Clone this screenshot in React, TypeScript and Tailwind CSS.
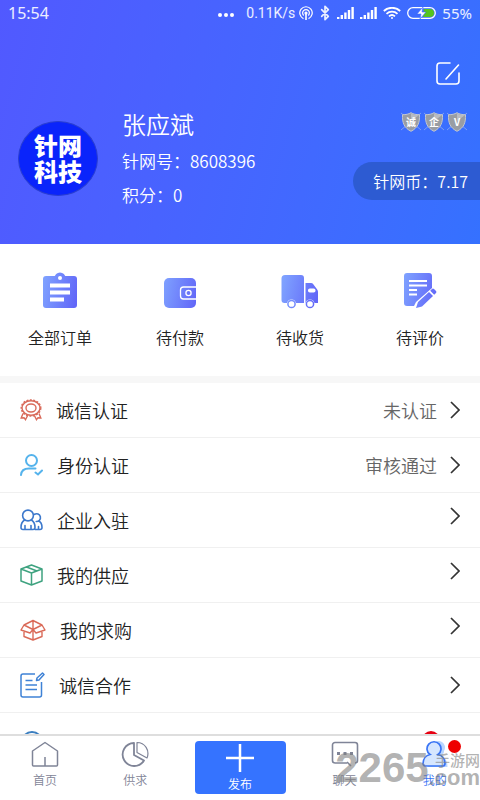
import type { ReactNode } from "react";
import { Bluetooth } from "lucide-react";
import clsx from "clsx";

const blue = "url(#order-blue)";

const orders = [
  {
    label: "全部订单",
    icon: (
      <>
        <rect x="3" y="4" width="34" height="32" rx="3" fill={blue} />
        <circle cx="20" cy="6" r="5.500" fill={blue} />
        <circle cx="20" cy="6" r="2" fill="#fff" />
        <path stroke="#fff" strokeWidth="4" d="M10 13.500h20M10 20.500h20M10 27.500h14" />
      </>
    ),
  },
  {
    label: "待付款",
    icon: (
      <>
        <rect x="4" y="6" width="32" height="30" rx="5" fill={blue} />
        <path
          fill="none"
          stroke="#fff"
          strokeWidth="1.300"
          d="M36 15H23.500a3 3 0 0 0-3 3v6a3 3 0 0 0 3 3H36"
        />
        <circle cx="28.500" cy="21" r="2.600" fill="none" stroke="#fff" strokeWidth="1.300" />
      </>
    ),
  },
  {
    label: "待收货",
    icon: (
      <>
        <path
          fill={blue}
          d="M5 3h16a3 3 0 0 1 3 3v25H4.500a3 3 0 0 1-3-3V6.500A3.500 3.500 0 0 1 5 3Zm20.500 8H31c1 0 1.700.4 2.300 1.200l3.700 5c.6.800 1 1.500 1 2.500V31H25.500Z"
        />
        <rect x="28" y="16.500" width="7.500" height="4" rx="1.800" fill="#fff" />
        <circle cx="11.500" cy="32" r="4.600" fill="#fff" />
        <circle cx="30" cy="32" r="4.600" fill="#fff" />
        <circle cx="11.500" cy="32" r="3.600" fill="#fff" stroke={blue} strokeWidth="1.500" />
        <circle cx="30" cy="32" r="3.600" fill="#fff" stroke={blue} strokeWidth="1.500" />
      </>
    ),
  },
  {
    label: "待评价",
    icon: (
      <>
        <path
          fill={blue}
          d="M7 1h22a3 3 0 0 1 3 3v12L16 30l-2 4H7a3 3 0 0 1-3-3V4a3 3 0 0 1 3-3Z"
        />
        <path stroke="#fff" strokeWidth="1.800" d="M9 9h18M9 13.500h18M9 18h8M9 22.500h8" />
        <path
          fill={blue}
          d="m29 20 4 4-11 10.500-6 1.500 2-6Zm1.200-1.200 1.800-1.800a1.500 1.500 0 0 1 2 0l2 2a1.500 1.500 0 0 1 0 2l-1.800 1.800Z"
        />
      </>
    ),
  },
];

type Row = { label?: string; value?: string; dot?: boolean; raised?: boolean; icon: ReactNode };

const rows: Row[] = [
  {
    label: "诚信认证",
    value: "未认证",
    icon: (
      <svg className="h-[22px] w-[22px]" viewBox="0 0 22 22" fill="none" stroke="#d96b5b" strokeWidth="1.400">
        <ellipse cx="11" cy="9" rx="9" ry="7.300" />
        <ellipse cx="11" cy="9" rx="9.800" ry="8.100" strokeDasharray="2 1.400" />
        <ellipse cx="11" cy="9" rx="5" ry="4" />
        <path d="M3 14.500 1.200 19l2.800-.3 1.500 2 2-3.900M19 14.500l1.800 4.500-2.800-.3-1.500 2-2-3.900" />
      </svg>
    ),
  },
  {
    label: "身份认证",
    value: "审核通过",
    icon: (
      <svg
        className="h-[22px] w-[23px]"
        viewBox="0 0 23 22"
        fill="none"
        stroke="#55b3ec"
        strokeWidth="2"
        strokeLinecap="round"
      >
        <circle cx="11.500" cy="6.500" r="5.500" />
        <path d="M1 21c.3-4.500 3.500-6.500 8-6.500h6.500M15.500 18.500l2.500 2 4-4" />
      </svg>
    ),
  },
  {
    label: "企业入驻",
    raised: true,
    icon: (
      <svg
        className="h-[22px] w-[23px]"
        viewBox="0 0 23 22"
        fill="none"
        stroke="#3c78cc"
        strokeWidth="1.600"
        strokeLinecap="round"
        strokeLinejoin="round"
      >
        <circle cx="8" cy="6.500" r="5.400" />
        <path d="M4.500 11C2 12.500 1 15.500 1 18.500c0 1.400.6 2 2 2h10c1.400 0 2-.6 2-2 0-3-1-6-3.500-7.500M5 20v-3.500M11 20v-3.500" />
        <path d="M14.500 5.300a3.900 3.900 0 1 1 1.700 7.200M18.500 12c2.500 1 3.500 3.500 3.500 6.500 0 1.400-.6 2-2 2h-5M18.500 20v-2.500" />
      </svg>
    ),
  },
  {
    label: "我的供应",
    raised: true,
    icon: (
      <svg
        className="h-[22px] w-[23px]"
        viewBox="0 0 23 22"
        fill="none"
        stroke="#3fa380"
        strokeWidth="1.500"
        strokeLinejoin="round"
      >
        <path d="M11.500 1 22 5v12l-10.500 4L1 17V5ZM1 5l10.500 4L22 5M11.500 9v12M6.500 3 17 7" />
      </svg>
    ),
  },
  {
    label: "我的求购",
    raised: true,
    icon: (
      <svg
        className="h-[22px] w-[26px]"
        viewBox="0 0 26 22"
        fill="none"
        stroke="#da6a58"
        strokeWidth="1.400"
        strokeLinejoin="round"
      >
        <path d="M4 6 13 1.500 22 6l3 5-9 3-3-3.500-3 3.500-9-3Zm0 0 9 4.500L22 6M4 12v5.500l9 3.500 9-3.500V12M13 1.500V21" />
      </svg>
    ),
  },
  {
    label: "诚信合作",
    icon: (
      <svg
        className="h-[26px] w-[25px]"
        viewBox="0 0 25 26"
        fill="none"
        stroke="#3f82d6"
        strokeWidth="1.500"
        strokeLinejoin="round"
      >
        <path d="M15 2H3a2 2 0 0 0-2 2v19a2 2 0 0 0 2 2h16.500a2 2 0 0 0 2-2V10" />
        <path d="m16.500 8.500.5-2.500 5.500-5 1.500 1.500-5 5.500ZM5.500 8.500h7M5.500 13h11.500M5.500 17.500h11.500" />
      </svg>
    ),
  },
  {
    dot: true,
    icon: (
      <svg className="h-[22px] w-6" viewBox="0 0 24 22" fill="none" stroke="#3c7fc0" strokeWidth="2">
        <circle cx="12" cy="13" r="10" />
      </svg>
    ),
  },
];

function Signal() {
  return (
    <svg className="h-3 w-[17px]" viewBox="0 0 17 12" stroke="#fff" strokeWidth="2.400">
      <path d="M1.200 12v-2M4.800 12V8M8.400 12V5.500M12 12V3M15.600 12V0" />
    </svg>
  );
}

function StatusBar() {
  return (
    <div className="flex h-[26px] items-center justify-between px-2 font-normal text-white/90">
      <span className="font-['Noto_Sans',sans-serif] text-base">15:54</span>
      <div className="flex items-center gap-1.5 font-[Roboto,sans-serif] text-[15px]">
        <svg className="mt-1 mr-1.5 h-1 w-4" viewBox="0 0 16 4" fill="#fff">
          <circle cx="2" cy="2" r="2" />
          <circle cx="8" cy="2" r="2" />
          <circle cx="14" cy="2" r="2" />
        </svg>
        <div className="flex items-center gap-1">
          <span className="text-sm">0.11K/s</span>
          <svg className="h-3.5 w-3.5" viewBox="0 0 14 14" fill="none" stroke="#fff" strokeWidth="1.200">
            <path d="M4.500 12.600a6.200 6.200 0 1 1 5 0M4.700 9.500a3.400 3.400 0 1 1 4.600 0" />
            <circle cx="7" cy="7" r="1" fill="#fff" />
            <path d="M7 8v6" strokeWidth="1.600" />
          </svg>
        </div>
        <Bluetooth className="-mx-0.5 h-4 w-4" strokeWidth={2.5} />
        <Signal />
        <Signal />
        <svg className="h-3 w-[18px]" viewBox="0 0 18 12" fill="none" stroke="#fff" strokeWidth="1.800">
          <path d="M.8 4a12 12 0 0 1 16.400 0M3.500 6.800a8 8 0 0 1 11 0M6 9.300a4.500 4.500 0 0 1 6 0" />
          <circle cx="9" cy="11" r="1" fill="#fff" stroke="none" />
        </svg>
        <div className="flex items-center gap-1.5">
          <svg className="h-3 w-[29px]" viewBox="0 0 29 12">
            <path d="M17 2h6a4 4 0 0 1 0 8h-7Z" fill="#55c41e" />
            <rect x=".7" y=".7" width="27.600" height="10.600" rx="5.300" fill="none" stroke="#fff" strokeWidth="1.300" />
            <path d="M16 0 10 7h4l-1 5 6-7h-4Z" fill="#fff" stroke="#3f6dff" strokeWidth=".6" />
          </svg>
          <span className="font-['Noto_Sans',sans-serif]">55%</span>
        </div>
      </div>
    </div>
  );
}

function Shield({ mark }: { mark: string }) {
  return (
    <span className="grid h-5 w-5 place-items-center">
      <svg className="col-start-1 row-start-1 h-5 w-5" viewBox="0 0 20 20">
        <path d="m0 1 20 17M20 1 0 18" stroke="#9db4ee" strokeWidth=".7" />
        <path
          d="M10 .7c2.500 1.500 5 2 8.500 2 .3 8-1.500 13-8.500 16.600C3 15.700 1.200 10.700 1.500 2.700c3.500 0 6-.5 8.500-2Z"
          fill="#999da3"
          stroke="#c3c7d0"
          strokeWidth="1"
        />
        <path d="M10 1.500c2.500 1.200 5 1.700 7.800 1.700L10 9Z" fill="#b9bcc2" />
      </svg>
      <span className="col-start-1 row-start-1 text-[10px] leading-none font-bold text-white">{mark}</span>
    </span>
  );
}

function Profile() {
  return (
    <header className="shrink-0 bg-linear-105 from-[#5159ff] to-[#3571ff] text-white">
      <StatusBar />
      <div className="flex justify-end pt-9 pr-5">
        <button aria-label="编辑" className="h-6 w-6">
          <svg viewBox="0 0 24 24" fill="none" stroke="#fff" strokeWidth="1.600" strokeLinecap="round">
            <path d="M14 1H4a3 3 0 0 0-3 3v15a3 3 0 0 0 3 3h16a3 3 0 0 0 3-3v-8M22.500 3 10 17" />
          </svg>
        </button>
      </div>
      <div className="flex items-center gap-6 pt-6 pb-[38px] pl-[18px]">
        <div className="flex h-[75px] w-20 shrink-0 flex-col items-center justify-center rounded-[50%] border border-[#2b3fd0] bg-[#0a24fb] text-2xl leading-[26px] font-black">
          <span>针网</span>
          <span>科技</span>
        </div>
        <div className="flex min-w-0 flex-1 flex-col gap-3 text-[17px] leading-[22px]">
          <h1 className="text-2xl leading-7">张应斌</h1>
          <p>针网号：8608396</p>
          <p>积分：0</p>
        </div>
        <div className="flex flex-col items-end gap-7 self-start">
          <div className="flex h-6 items-center gap-[3px] pr-[13px]">
            <Shield mark="诚" />
            <Shield mark="企" />
            <Shield mark="V" />
          </div>
          <div className="flex h-[38px] items-center rounded-l-full bg-[#2d5bd2] pr-3 pl-5 text-base">
            针网币：7.17
          </div>
        </div>
      </div>
    </header>
  );
}

function Orders() {
  return (
    <section className="grid grid-cols-4 pt-7 pb-[27px]">
      {orders.map((order) => (
        <a key={order.label} href="#" className="flex flex-col items-center gap-4 text-base text-[#222]">
          <svg className="h-[37px] w-10" viewBox="0 0 40 37">
            {order.icon}
          </svg>
          <span>{order.label}</span>
        </a>
      ))}
    </section>
  );
}

function MenuRow({ row }: { row: Row }) {
  return (
    <li className="border-b border-[#f0f0f0]">
      <a href="#" className="flex h-[54px] items-center px-5 text-lg text-[#222]">
        {row.icon}
        <span className="ml-3.5 flex-1">{row.label}</span>
        {row.value && <span className="mr-[13px] text-[#666]">{row.value}</span>}
        {row.dot ? (
          <span className="mr-5 h-[18px] w-[18px] rounded-full bg-[#e60012]" />
        ) : (
          <svg
            className={clsx("w-2.5", row.raised ? "h-[26px] pb-2" : "h-[18px]")}
            viewBox="0 0 10 18"
            fill="none"
            stroke="#333"
            strokeWidth="1.700"
          >
            <path d="m1 1 8 8-8 8" />
          </svg>
        )}
      </a>
    </li>
  );
}

function Tab({ label, active, children }: { label: string; active?: boolean; children: ReactNode }) {
  return (
    <a
      href="#"
      className={clsx(
        "flex flex-1 flex-col items-center gap-1 pt-1 text-xs",
        active ? "text-[#3974f5]" : "text-[#7f8497]"
      )}
    >
      <span className="relative">
        <svg className="h-7 w-7" viewBox="0 0 28 28" fill="none" stroke="currentColor" strokeWidth="1.500">
          {children}
        </svg>
        {active && <span className="absolute top-0 -right-3 h-[13px] w-[13px] rounded-full bg-[#ee0000]" />}
      </span>
      <span>{label}</span>
    </a>
  );
}

function TabBar() {
  return (
    <nav className="relative flex h-[66px] shrink-0 border-t-2 border-[#dedede] bg-white">
      <Tab label="首页">
        <path d="M1.500 11 14 2.500 26.500 11v14a1 1 0 0 1-1 1h-23a1 1 0 0 1-1-1ZM14 17v9" strokeLinejoin="round" />
      </Tab>
      <Tab label="供求">
        <path d="M13 3a11.500 11.500 0 1 0 10 17.500L13 15Z" strokeWidth="1.800" strokeLinejoin="round" />
        <path d="M16 2.500c8 0 13 8 10 15.500l-10-5.500Z" strokeWidth="1.200" strokeLinejoin="round" />
      </Tab>
      <button className="mx-3.5 mt-[5px] mb-1.5 flex w-[91px] flex-col items-center rounded-sm bg-[#3573ff] pt-[3px] text-xs text-white">
        <svg className="h-7 w-7" viewBox="0 0 28 28" stroke="#fff" strokeWidth="2.500">
          <path d="M14 0v28M0 14h28" />
        </svg>
        <span className="pt-1">发布</span>
      </button>
      <Tab label="聊天">
        <path
          d="M16 23H4a2.500 2.500 0 0 1-2.500-2.500V5A2.500 2.500 0 0 1 4 2.500h20A2.500 2.500 0 0 1 26.500 5v15.500A2.500 2.500 0 0 1 24 23M16 22l4 4"
          strokeWidth="1.600"
        />
        <path d="M6 13.500h3M12.500 13.500h3M19 13.500h3" strokeWidth="3" />
      </Tab>
      <Tab label="我的" active>
        <path
          d="M12 4a6.500 6.500 0 0 1 11 7c0 2-1 3.500-2.500 4.500 4 2 6 6 6 11.500H7Z"
          fill="#b9d6ff"
          stroke="none"
        />
        <path
          d="M9 14.500a7 7 0 1 1 8 0c4 1 7 4.500 7 9 0 1.500-1 2.500-2.500 2.500h-17C3 26 2 25 2 23.500c0-4.500 3-8 7-9Z"
          fill="#d5e6ff"
          strokeWidth="1.700"
        />
      </Tab>
      <div className="pointer-events-none absolute right-0 bottom-3 flex items-end font-['Liberation_Sans',sans-serif] leading-none font-bold text-[#808080]/60">
        <span className="text-[42px] leading-10">2265</span>
        <span className="flex flex-col items-end">
          <span className="font-['Noto_Sans_CJK_SC',sans-serif] text-[15px] leading-4 font-medium">手游网</span>
          <span className="text-[22px] leading-5">.com</span>
        </span>
      </div>
    </nav>
  );
}

export default function App() {
  return (
    <div
      lang="zh-CN"
      className="flex h-screen flex-col bg-white font-['Noto_Sans_CJK_SC',sans-serif] font-[350]"
    >
      <svg className="absolute h-0 w-0" aria-hidden="true">
        <linearGradient id="order-blue" gradientUnits="userSpaceOnUse" x1="2" y1="12" x2="38" y2="20">
          <stop stopColor="#7fa2ff" />
          <stop offset="1" stopColor="#6267f8" />
        </linearGradient>
      </svg>
      <Profile />
      <main className="min-h-0 flex-1 overflow-y-auto [scrollbar-width:none]">
        <Orders />
        <ul className="border-t-[7px] border-[#f7f7f7]">
          {rows.map((row, i) => (
            <MenuRow key={i} row={row} />
          ))}
        </ul>
      </main>
      <TabBar />
    </div>
  );
}
